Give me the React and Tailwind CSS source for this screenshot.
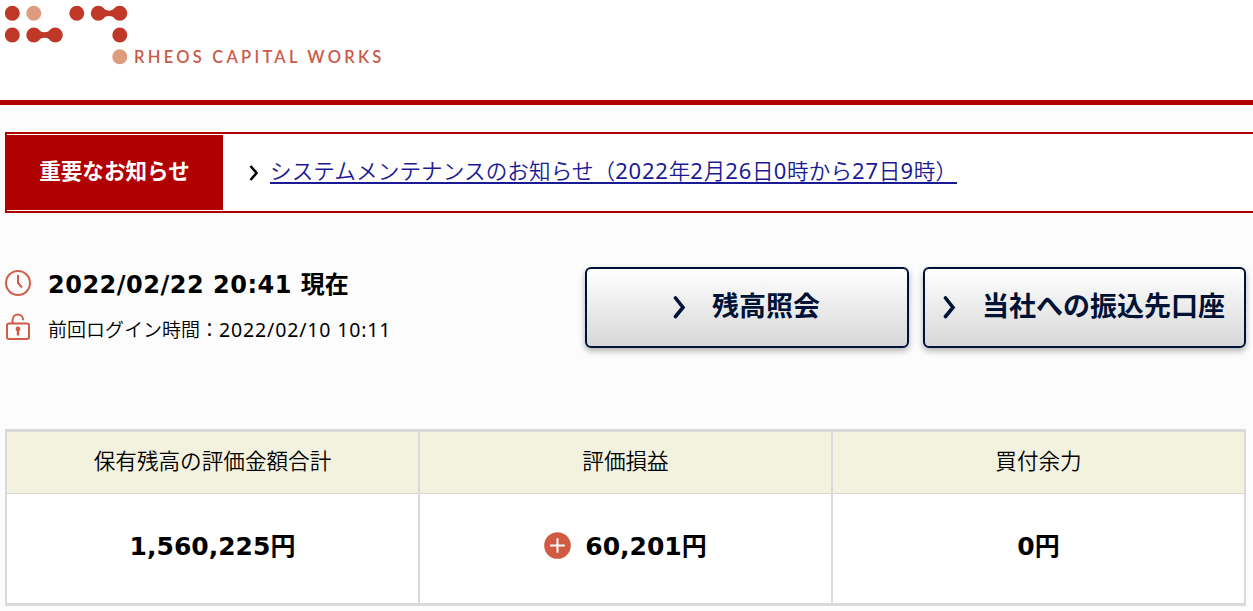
const summary = [
  { label: "保有残高の評価金額合計", amount: "1,560,225" },
  { label: "評価損益", amount: "60,201", plus: true },
  { label: "買付余力", amount: "0" },
];

function Logo() {
  return (
    <svg width="124" height="60" viewBox="0 0 124 60" fill="#c03928">
      <circle cx="7.3" cy="8.3" r="7.5" />
      <circle cx="28.8" cy="8.3" r="7.5" fill="#dd9c7d" />
      <circle cx="71.8" cy="8.3" r="7.5" />
      <circle cx="93.3" cy="8.3" r="7.5" />
      <circle cx="114.8" cy="8.3" r="7.5" />
      <path d="M96 1.5C101 7 107 7 112 1.5V15.1C107 9.6 101 9.6 96 15.1Z" />
      <circle cx="7.3" cy="30" r="7.5" />
      <circle cx="28.8" cy="30" r="7.5" />
      <circle cx="50.3" cy="30" r="7.5" />
      <path d="M31.5 23.2C36.5 28.7 42.5 28.7 47.5 23.2V36.8C42.5 31.3 36.5 31.3 31.5 36.8Z" />
      <circle cx="114.8" cy="30" r="7.5" />
      <circle cx="114.8" cy="51.7" r="7.5" fill="#dd9c7d" />
    </svg>
  );
}

function ClockIcon() {
  return (
    <svg width="26" height="26" viewBox="0 0 26 26" fill="none" stroke="#d15d46">
      <circle cx="13" cy="13" r="12" strokeWidth="2" />
      <path d="M13 5V13L17 17.5" strokeWidth="2" />
    </svg>
  );
}

function LockIcon() {
  return (
    <svg width="26" height="28" viewBox="0 0 26 28" fill="none" stroke="#d15d46">
      <rect x="2" y="10.5" width="22" height="15.5" rx="2" strokeWidth="2" />
      <path d="M7.5 10.5V7.2C7.5 -0.5 18.2 -0.5 18.2 7.2" strokeWidth="2" />
      <circle cx="13" cy="16" r="2.4" fill="#d15d46" stroke="none" />
      <path d="M13 16V22.5" strokeWidth="2.4" />
    </svg>
  );
}

function PlusIcon() {
  return (
    <svg width="27" height="27" viewBox="0 0 27 27">
      <circle cx="13.5" cy="13.5" r="13.3" fill="#d15a43" />
      <path d="M13.5 6.2V20.8M6.2 13.5H20.8" stroke="#fff" strokeWidth="2" />
    </svg>
  );
}

function ButtonArrow() {
  return (
    <svg width="13" height="24" viewBox="0 0 13 24" fill="none">
      <path
        d="M2.5 2L10 11.5L2.5 20.5"
        stroke="#001235"
        strokeWidth="3.6"
        strokeLinecap="round"
      />
    </svg>
  );
}

function Num({ children }) {
  return (
    <span className="font-['Noto_Sans',sans-serif] text-[22px] font-normal tracking-[0.75px]">
      {children}
    </span>
  );
}

export default function App() {
  return (
    <div className="h-[611px] w-[1253px] overflow-hidden bg-[#fcfcfc] font-['DejaVu_Sans','Noto_Sans_CJK_JP',sans-serif] text-black">
      <header className="flex h-[105px] border-b-5 border-[#b10000] bg-white pt-[5px] pl-[5px]">
        <Logo />
        <div className="mt-[42px] ml-[5px] font-['Lato',sans-serif] text-[16.5px] leading-[20px] font-semibold tracking-[3.25px] whitespace-nowrap text-[#cb5a48]">
          RHEOS CAPITAL WORKS
        </div>
      </header>

      <section className="mt-[27px] ml-[5px] flex h-[81px] items-center border-y-2 border-l-2 border-[#b10000] bg-white">
        <div className="-ml-0.5 flex h-[75px] w-[218px] items-center justify-center bg-[#b10000] pb-px pl-px text-[21.6px] font-bold whitespace-nowrap text-white">
          重要なお知らせ
        </div>
        <svg className="ml-[26px]" width="10" height="18" viewBox="0 0 10 18" fill="none">
          <path d="M1.5 2L7.5 9L1.5 16" stroke="#000" strokeWidth="2.6" />
        </svg>
        <a
          href="#"
          className="mt-[-2px] ml-[11px] block h-[25px] border-b-2 border-[#1a1a95] text-[21.6px] leading-[23px] font-[350] tracking-[0.08px] whitespace-nowrap text-[#1a1a95]"
        >
          システムメンテナンスのお知らせ（<Num>2022</Num>年<Num>2</Num>月
          <Num>26</Num>日<Num>0</Num>時から<Num>27</Num>日<Num>9</Num>時）
        </a>
      </section>

      <section className="mt-[54px] flex h-[81px] items-start justify-between pr-[7px] pl-[5px]">
        <div className="pt-[2px]">
          <div className="flex h-[27px] items-center gap-[17px]">
            <ClockIcon />
            <p className="pt-[5px] text-[24px] leading-[26px] font-bold whitespace-nowrap">
              <span className="tracking-[0.5px]">2022/02/22 20:41 </span>現在
            </p>
          </div>
          <div className="mt-[17px] flex h-[28px] items-center gap-[17px]">
            <LockIcon />
            <p className="pt-[5px] text-[19px] leading-[26px] font-[350] whitespace-nowrap">
              前回ログイン時間：
              <span className="font-['Noto_Sans',sans-serif] text-[19.5px] font-normal tracking-[0.85px]">
                2022/02/10 10:11
              </span>
            </p>
          </div>
        </div>
        <div className="flex gap-[14px]">
          <button className="flex h-[81px] w-[324px] items-center justify-center gap-[26px] rounded-md border-2 border-[#001235] bg-linear-to-b from-white to-[#d8d8d8] pr-px text-[27px] font-bold whitespace-nowrap text-[#001235] shadow-[0_3px_6px_rgba(0,0,0,0.3)]">
            <ButtonArrow />
            残高照会
          </button>
          <button className="flex h-[81px] w-[323px] items-center justify-center gap-[26px] rounded-md border-2 border-[#001235] bg-linear-to-b from-white to-[#d8d8d8] pr-px text-[27px] font-bold whitespace-nowrap text-[#001235] shadow-[0_3px_6px_rgba(0,0,0,0.3)]">
            <ButtonArrow />
            当社への振込先口座
          </button>
        </div>
      </section>

      <section className="mt-[81px] ml-[5px] grid h-[177px] w-[1241px] grid-cols-3 gap-x-0.5 border-x-2 border-y-3 border-[#dadada] bg-[#dadada]">
        {summary.map((item) => (
          <div key={item.label} className="flex flex-col gap-px">
            <div className="flex h-[61px] items-center justify-center bg-[#f3f2df] pb-px text-[21.6px] font-[350]">
              {item.label}
            </div>
            <div className="flex h-[109px] items-center justify-center gap-[14px] bg-white pb-[6px] text-[25px] font-bold">
              {item.plus && <PlusIcon />}
              <span className="pt-[3px]">{item.amount}円</span>
            </div>
          </div>
        ))}
      </section>
    </div>
  );
}
